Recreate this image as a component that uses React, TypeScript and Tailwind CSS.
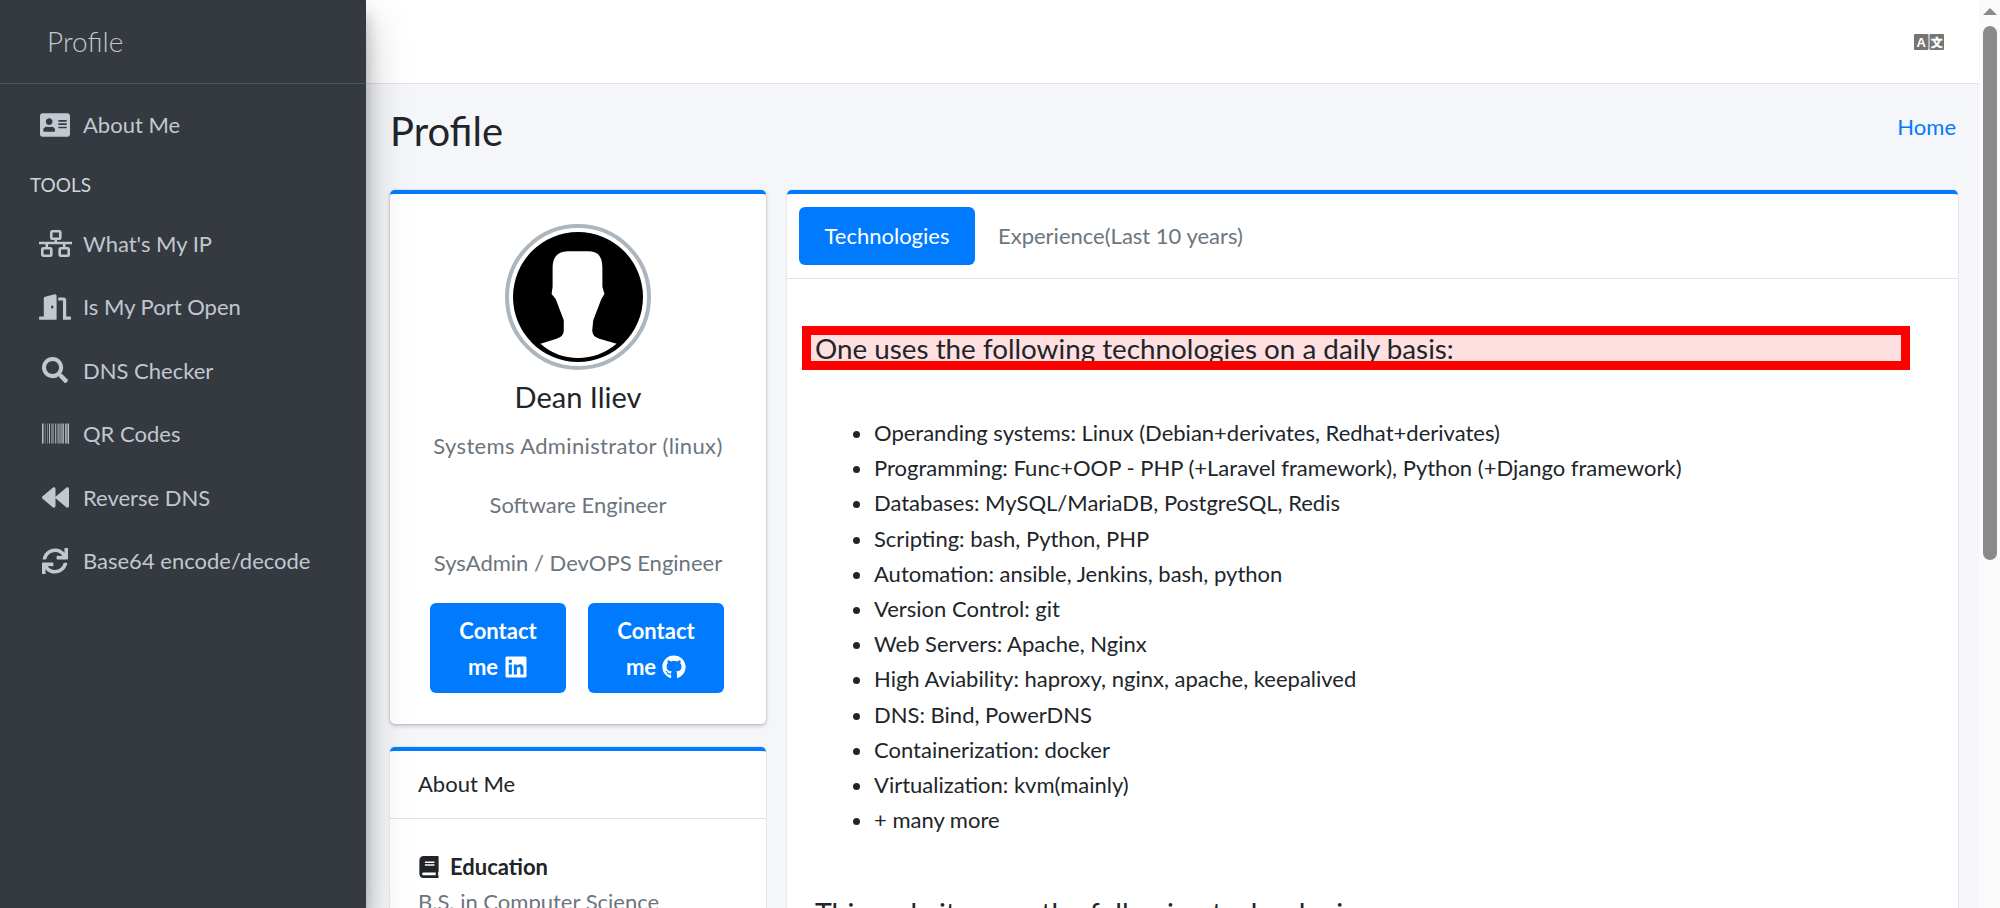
import { FaAddressCard, FaBackward, FaBarcode, FaBook, FaDoorOpen, FaGithub, FaLinkedin, FaSearch, FaSync } from "react-icons/fa";
import type { IconType } from "react-icons";

type NavIcon = React.FC<{ className?: string }>;

const HollowSitemap: NavIcon = ({ className }) => (
	<svg viewBox="0 0 33 27" fill="none" stroke="currentColor" strokeWidth="2.6" className={className}>
		<rect x="12.3" y="1.3" width="9" height="7.4" rx="1" />
		<rect x="3.3" y="18.3" width="9" height="7.4" rx="1" />
		<rect x="20.7" y="18.3" width="9" height="7.4" rx="1" />
		<path d="M0 13h33M16.8 9v4M7.8 13v5M25.2 13v5" />
	</svg>
);

const tools: { label: string; icon: NavIcon; size: string }[] = [
	{ label: "What's My IP", icon: HollowSitemap, size: "w-[33px] h-[27px]" },
	{ label: "Is My Port Open", icon: FaDoorOpen, size: "text-[32px]" },
	{ label: "DNS Checker", icon: FaSearch, size: "text-[26px]" },
	{ label: "QR Codes", icon: FaBarcode, size: "text-[27px]" },
	{ label: "Reverse DNS", icon: FaBackward, size: "text-[27px]" },
	{ label: "Base64 encode/decode", icon: FaSync, size: "text-[26px]" },
];

const technologies = [
	"Operanding systems: Linux (Debian+derivates, Redhat+derivates)",
	"Programming: Func+OOP - PHP (+Laravel framework), Python (+Django framework)",
	"Databases: MySQL/MariaDB, PostgreSQL, Redis",
	"Scripting: bash, Python, PHP",
	"Automation: ansible, Jenkins, bash, python",
	"Version Control: git",
	"Web Servers: Apache, Nginx",
	"High Aviability: haproxy, nginx, apache, keepalived",
	"DNS: Bind, PowerDNS",
	"Containerization: docker",
	"Virtualization: kvm(mainly)",
	"+ many more",
];

const NavItem: React.FC<{ label: string; icon: NavIcon; size: string }> = ({ label, icon: Icon, size }) => (
	<a className="flex h-[63.5px] items-center text-[#c2c7d0]">
		<span className="flex w-[83px] shrink-0 justify-center pl-[27px]">
			<Icon className={size} />
		</span>
		<span>{label}</span>
	</a>
);

const ContactButton: React.FC<{ icon: IconType }> = ({ icon: Icon }) => (
	<a className="flex h-[90px] w-[136px] flex-col items-center justify-center rounded-[6px] bg-[#007bff] pt-[2px] font-bold leading-[36px] text-white">
		<span>Contact</span>
		<span className="flex items-center gap-[6px]">
			me <Icon className="text-[24px]" />
		</span>
	</a>
);

const Avatar = () => (
	<div className="h-[146px] w-[146px] rounded-full border-[4px] border-[#adb5bd] p-[4px]">
		<svg viewBox="0 0 128 128" className="h-full w-full">
			<circle cx="64" cy="64" r="64" fill="#000" />
			<path
				fill="#fff"
				d="M39 36C39 22 46 19 56 19L74 19C84 19 88 24 88 36L88 54L90 61L87 66L79 87L78 97Q78 103 85 105L102 110Q85 124 64 124Q43 124 27 110L43 105Q50 103 50 97L50 87L42 66L38 61L39 54Z"
			/>
		</svg>
	</div>
);

const TranslateIcon = () => (
	<svg viewBox="0 0 30 16" className="h-[16px] w-[30px]">
		<rect x="0" y="0" width="14.5" height="16" rx="1" fill="#757575" />
		<rect x="15.5" y="0" width="14.5" height="16" rx="1" fill="#757575" />
		<text x="7.2" y="13" textAnchor="middle" fontSize="13" fontWeight="700" fill="#fff" fontFamily="Liberation Sans">
			A
		</text>
		<text x="22.7" y="12.8" textAnchor="middle" fontSize="11.5" fontWeight="700" fill="#fff" stroke="#fff" strokeWidth="0.5" fontFamily="Noto Sans CJK SC">
			文
		</text>
	</svg>
);

export default function App() {
	return (
		<div className="flex h-[908px] w-[2000px] overflow-hidden bg-[#f4f6f9] font-['Lato','Noto_Sans',sans-serif] text-[22px] text-[#212529]">
			<aside className="z-10 w-[366px] shrink-0 bg-[#343a40] shadow-[0_20px_40px_rgba(0,0,0,0.25),0_14px_14px_rgba(0,0,0,0.22)]">
				<div className="flex h-[84px] items-center border-b border-[#4b545c] pb-[2px] pl-[47px] text-[28px] font-light text-[#c2c7d0]">
					Profile
				</div>
				<nav className="pt-[9px]">
					<NavItem label="About Me" icon={FaAddressCard} size="text-[30px]" />
					<div className="flex h-[55px] items-center pl-[30px] pt-[2px] text-[19px] text-[#d0d4db]">TOOLS</div>
					{tools.map((tool) => (
						<NavItem key={tool.label} label={tool.label} icon={tool.icon} size={tool.size} />
					))}
				</nav>
			</aside>

			<main className="min-w-0 flex-1">
				<header className="flex h-[84px] items-center justify-end border-b border-[#dee2e6] bg-white pr-[35px]">
					<TranslateIcon />
				</header>

				<div className="pl-[24px] pr-[21px]">
					<div className="flex h-[106px] items-center justify-between pb-[12px]">
						<h1 className="text-[40px] leading-none">Profile</h1>
						<a className="mb-[10px] pr-[2px] text-[#007bff]">Home</a>
					</div>

					<div className="flex gap-[21px]">
						<div className="flex w-[376px] shrink-0 flex-col gap-[23px]">
							<section className="flex h-[534px] flex-col items-center rounded-[5px] border-t-[4px] border-[#007bff] bg-white pt-[30px] shadow-[0_0_2px_rgba(0,0,0,0.2),0_2px_4px_rgba(0,0,0,0.2)]">
								<Avatar />
								<h3 className="mt-[2px] text-[29px] leading-[50px]">Dean Iliev</h3>
								<p className="leading-[48px] tracking-[0.35px] text-[#6c757d]">Systems Administrator (linux)</p>
								<p className="mt-[11px] leading-[48px] text-[#6c757d]">Software Engineer</p>
								<p className="mt-[10px] leading-[48px] text-[#6c757d]">SysAdmin / DevOPS Engineer</p>
								<div className="mr-[2px] mt-[16px] flex gap-[22px]">
									<ContactButton icon={FaLinkedin} />
									<ContactButton icon={FaGithub} />
								</div>
							</section>

							<section className="rounded-[5px] border-t-[4px] border-[#007bff] bg-white shadow-[0_0_2px_rgba(0,0,0,0.2)]">
								<div className="flex h-[68px] items-center border-b border-[#dee2e6] pb-[2px] pl-[28px]">About Me</div>
								<div className="px-[28px] pt-[30px]">
									<div className="flex items-center gap-[10px] font-bold leading-[35px]">
										<FaBook className="text-[22px]" /> Education
									</div>
									<p className="leading-[35px] text-[#6c757d]">B.S. in Computer Science</p>
								</div>
							</section>
						</div>

						<section className="flex-1 rounded-[5px] border-t-[4px] border-[#007bff] bg-white shadow-[0_0_2px_rgba(0,0,0,0.2)]">
							<div className="flex h-[85px] items-center gap-[23px] border-b border-[#dee2e6] px-[12px] pb-[1px]">
								<a className="flex h-[58px] w-[176px] items-center justify-center rounded-[6px] bg-[#007bff] text-white">
									Technologies
								</a>
								<a className="text-[#6c757d]">Experience(Last 10 years)</a>
							</div>
							<div className="pl-[15px] pr-[48px] pt-[47px]">
								<h5 className="h-[44px] overflow-hidden border-[9px] border-[#ff0000] bg-[#ffe0e0] pl-[4px] text-[27.8px] leading-[28px]">
									One uses the following technologies on a daily basis:
								</h5>
								<ul className="mt-[45px] list-disc pl-[72px] leading-[35.2px]">
									{technologies.map((item) => (
										<li key={item}>{item}</li>
									))}
								</ul>
								<h5 className="mt-[59px] pl-[13px] text-[28.5px] leading-[35px]">This website uses the following technologies:</h5>
							</div>
						</section>
					</div>
				</div>
			</main>

			<div className="flex w-[21px] shrink-0 flex-col items-center bg-[#fafafa] pt-[8px]">
				<div className="h-0 w-0 border-x-[7px] border-b-[7px] border-x-transparent border-b-[#8a8a8a]" />
				<div className="mt-[11px] h-[534px] w-[14px] rounded-full bg-[#8a8a8a]" />
			</div>
		</div>
	);
}
